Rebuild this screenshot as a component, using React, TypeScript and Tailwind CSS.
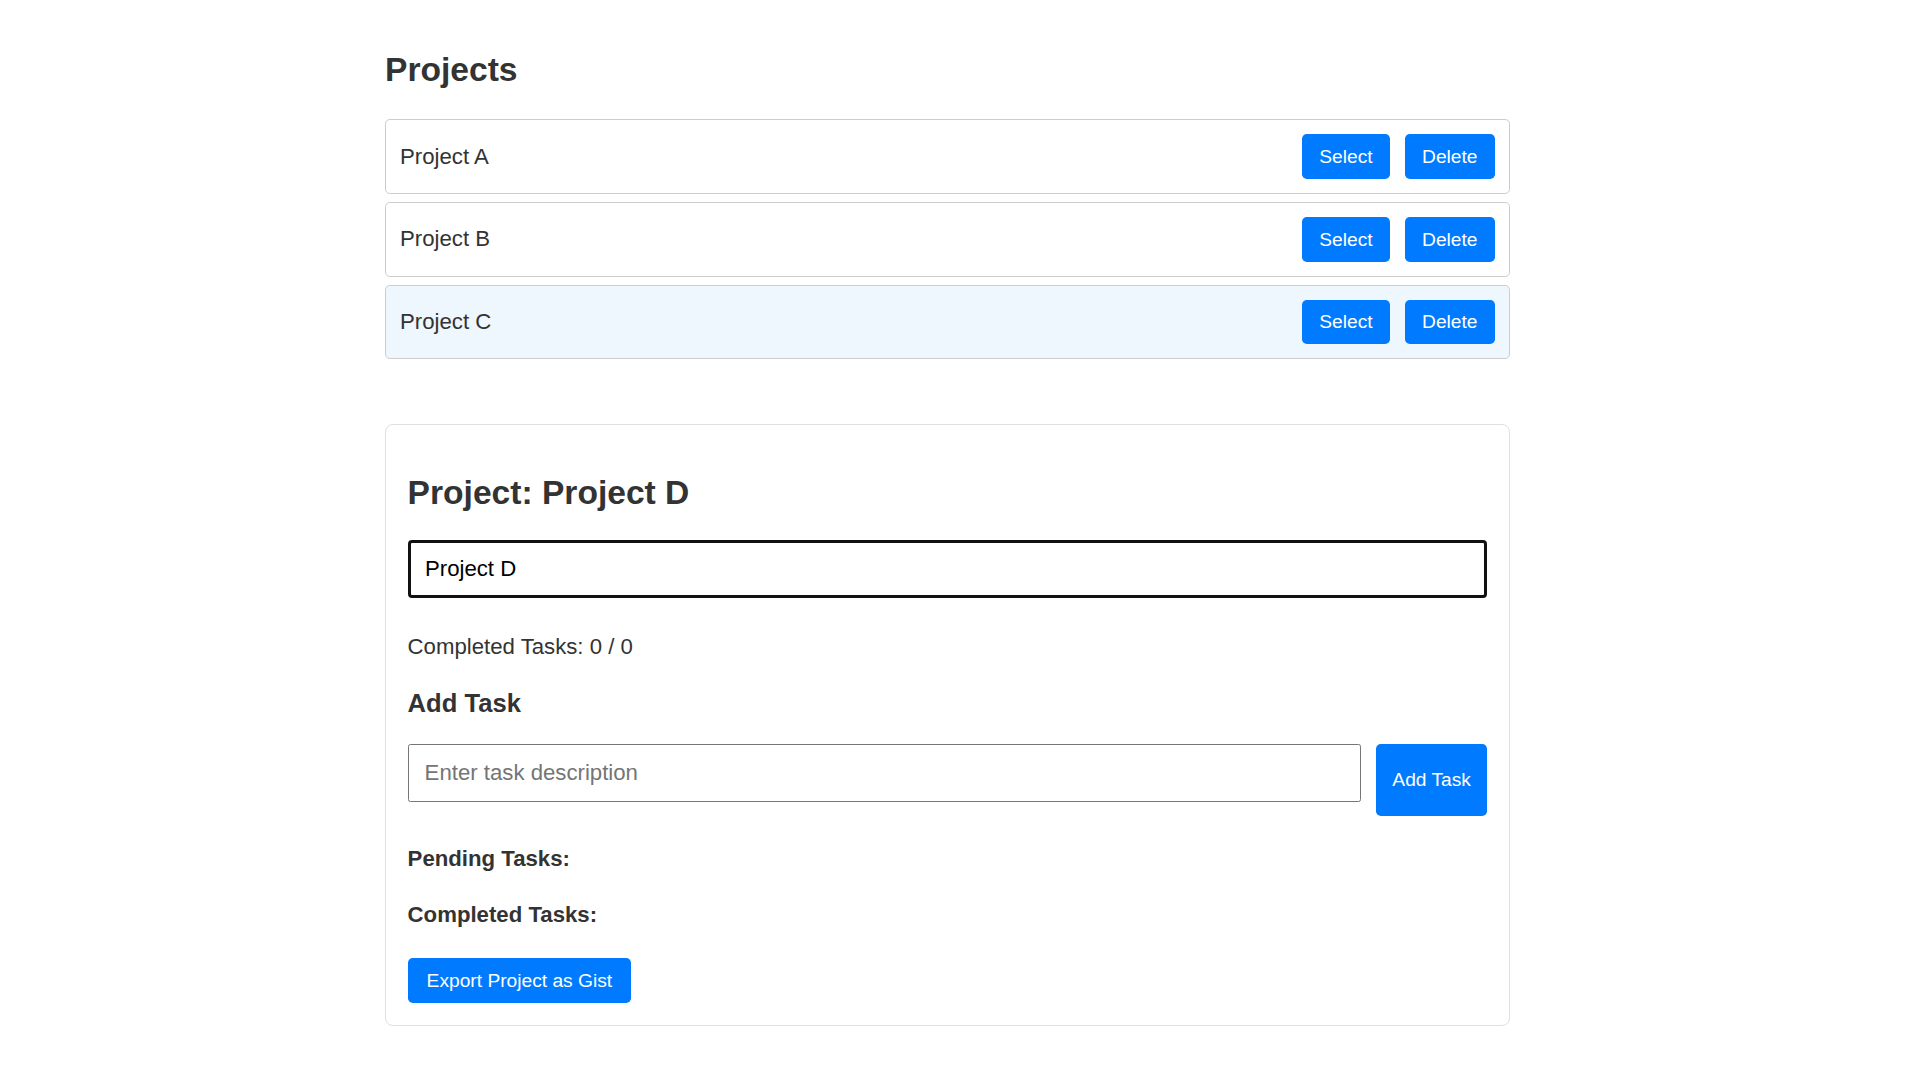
import React, { useState } from 'react';

const PROJECTS = [
  { id: 'a', name: 'Project A' },
  { id: 'b', name: 'Project B' },
  { id: 'c', name: 'Project C' },
];

const btn = 'shrink-0 rounded-[4.8px] bg-[#007bff] text-white text-[19.2px] leading-none font-["Liberation_Sans",Arial,sans-serif] hover:bg-[#0069d9]';

// --- MAIN APP ---
export default function App() {
  const [selected, setSelected] = useState('c');
  const [title, setTitle] = useState('Project D');
  const [task, setTask] = useState('');

  return (
    // page width leaves room for the browser's scrollbar, as in the reference
    <div className="min-h-screen w-[1895px] bg-white text-[#333] font-['Liberation_Sans',Arial,sans-serif]">
      <div className="mx-auto w-[1125px] pt-[50.4px] pb-[54px]">
        {/* --- PROJECT LIST --- */}
        <h2 className="text-[33.6px] font-bold leading-[40px]">Projects</h2>
        <div className="mt-[29px] flex flex-col gap-[8px]">
          {PROJECTS.map((p) => (
            <div
              key={p.id}
              className={`flex items-center justify-between rounded-[4.8px] border border-[#cccccc] p-[14px] ${selected === p.id ? 'bg-[#eef6fe]' : 'bg-white'}`}
            >
              <span className="text-[22.2px] leading-[26px]">{p.name}</span>
              <div className="flex gap-[14.4px]">
                <button onClick={() => setSelected(p.id)} className={`${btn} h-[44.6px] px-[17.5px]`}>Select</button>
                <button className={`${btn} h-[44.6px] px-[17.5px]`}>Delete</button>
              </div>
            </div>
          ))}
        </div>

        {/* --- PROJECT DETAIL --- */}
        <div className="mt-[64.5px] rounded-[8px] border border-[#e0e0e0] px-[21.6px] pt-[48px] pb-[21.6px]">
          <h2 className="text-[33.6px] font-bold leading-[40px]">Project: {title}</h2>
          <input
            className="mt-[27.3px] block h-[57.6px] w-full rounded-[4px] border-[3px] border-[#111] px-[14.4px] text-[22.2px] text-black outline-none"
            value={title}
            onChange={(e) => setTitle(e.target.value)}
          />
          <p className="mt-[36.7px] text-[22.2px] leading-[26px]">Completed Tasks: 0 / 0</p>
          <h3 className="mt-[27.3px] text-[25.6px] font-bold leading-[30px]">Add Task</h3>
          <div className="mt-[26.4px] flex items-start gap-[14.4px]">
            <input
              className="h-[58px] flex-1 rounded-[2.4px] border border-[#767676] px-[16px] text-[22.2px] text-black outline-none placeholder:text-[#757575]"
              placeholder="Enter task description"
              value={task}
              onChange={(e) => setTask(e.target.value)}
            />
            <button className={`${btn} h-[72px] px-[16.5px]`}>Add Task</button>
          </div>
          <h4 className="mt-[30.3px] text-[22.2px] font-bold leading-[26px]">Pending Tasks:</h4>
          <h4 className="mt-[30px] text-[22.2px] font-bold leading-[26px]">Completed Tasks:</h4>
          <button className={`${btn} mt-[29.7px] h-[45.5px] px-[19px]`}>Export Project as Gist</button>
        </div>
      </div>
    </div>
  );
}
